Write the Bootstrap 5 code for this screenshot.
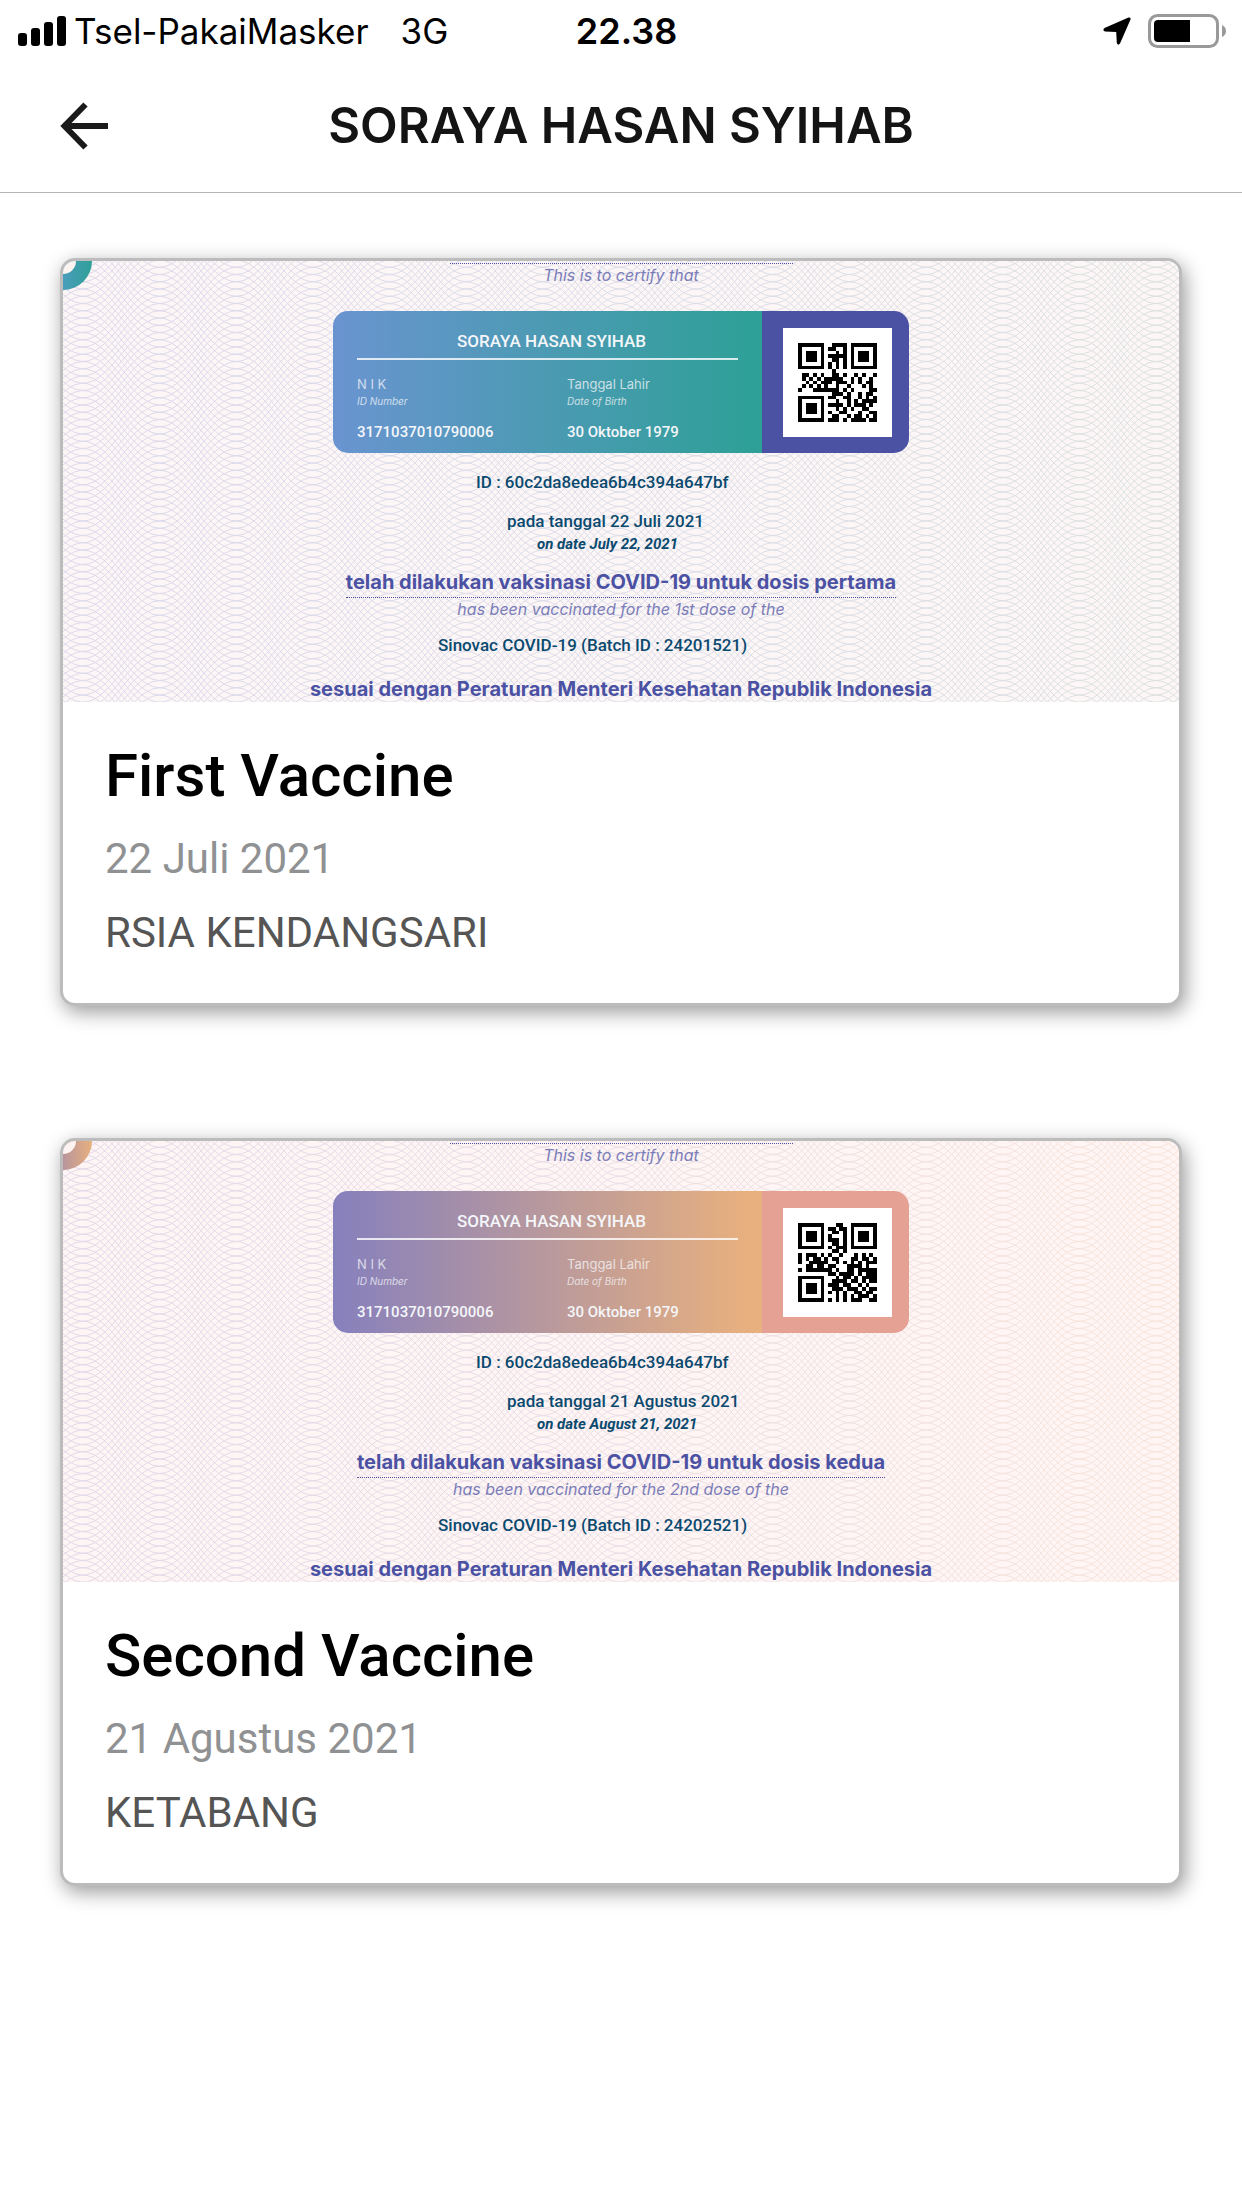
<!DOCTYPE html>
<html lang="id">
<head>
<meta charset="utf-8">
<meta name="viewport" content="width=device-width, initial-scale=1">
<title>Vaccine certificates</title>
<link rel="stylesheet" href="https://cdn.jsdelivr.net/npm/bootstrap@5.3.0/dist/css/bootstrap.min.css">
<style>
body{font-family:Roboto,"Liberation Sans",sans-serif;background:#fff;color:#000}
.status-row{height:60px;padding:2px 15px 0 18px;font:400 35px/40px Inter,sans-serif}
.status-time{font-size:36px;font-weight:600;padding-left:8px}
.top-nav{height:133px;padding:0 60px 1px;border-bottom:1px solid #b4b4b4}
.top-nav h1{font:600 49px/60px Inter,sans-serif;color:#141414}
.back-btn,.nav-spacer{width:48px;height:48px}
.vaccine-list{padding:65px 60px;gap:132px}
.vaccine-card{border:3px solid #bcbcbc;border-radius:15px;box-shadow:3px 6px 20px rgba(0,0,0,.4);overflow:hidden}
.cert{height:441px;background:var(--paper);overflow:hidden}
.cert-art{top:0;left:0;width:100%;height:100%}
.cert-text{width:576px;max-width:100%;font-size:17px;line-height:20px;color:#0b4a6f;font-weight:500;padding-top:2px}
.dots-top{width:343px;border-top:1px dotted #4b51a3}
.lbl-en{font:italic 400 16px/22px Inter,sans-serif;color:#7a7db8}
.lbl-id{font:700 20px/26px Inter,sans-serif;color:#4b51a3}
.lbl-line{border-bottom:1px dotted #4b51a3;padding-bottom:2px}
.id-box{height:142px;border-radius:15px;overflow:hidden;margin:25px 0 19px;color:#f4f6fa}
.id-main{width:429px;padding:20px 24px 0;background:linear-gradient(90deg,var(--g1),var(--g2) 97%)}
.id-name{border-bottom:2px solid rgba(255,255,255,.8);padding-bottom:7px;margin-bottom:16px;padding-left:8px}
.id-col{width:210px}
.fld{font:400 13px/16px Inter,sans-serif;opacity:.75}
.fld-en{font:italic 400 10px/14px Inter,sans-serif;opacity:.75;margin:2px 0 14px}
.fld-val{font-size:15px;line-height:20px}
.id-code{background:var(--accent)}
.qr{width:109px;height:109px;background:#fff}
.ln-id{padding-left:143px}
.ln-date{padding-left:174px;margin-top:19px}
.ln-date-en{padding-left:204px;margin:3px 0 15px;font-size:15px;font-weight:700;font-style:italic}
.ln-batch{padding-left:105px;margin:15px 0 21px}
.tone-blue{--paper:#fdf6f6;--g1:#6a94d0;--g2:#2fa098;--accent:#4b51a3}
.tone-peach{--paper:#fef5f4;--g1:#8680bd;--g2:#e8b07e;--accent:#e5a294}
.vaccine-info{padding:38px 42px 45px}
.vaccine-info h2{font-size:60px;line-height:72px;font-weight:500;margin-bottom:22px}
.vaccine-info p{font-size:42px;line-height:50px;margin:0}
.vaccine-info .when{color:#8f9193;margin-bottom:24px}
.vaccine-info .place{color:#555}
</style>
</head>
<body>
<header>
  <div class="status-row d-flex align-items-center">
    <div class="d-flex align-items-center flex-fill w-50">
      <svg width="48" height="30" viewBox="0 0 48 30" class="me-2 flex-shrink-0"><rect y="17" width="9" height="13" rx="3"/><rect x="13" y="12" width="9" height="18" rx="3"/><rect x="26" y="6" width="9" height="24" rx="3"/><rect x="39" width="9" height="30" rx="3"/></svg>
      <span>Tsel-PakaiMasker</span><span class="ms-4 ps-2">3G</span>
    </div>
    <div class="status-time">22.38</div>
    <div class="d-flex align-items-center justify-content-end flex-fill w-50">
      <svg width="28" height="28" viewBox="0 0 28 28" class="me-3"><path d="M25.500 .5Q28 .2 27.500 2.500L17 26.500Q15 29 13.800 26L13.200 15L2 14.600Q-1 13 1.500 11Z"/></svg>
      <svg width="80" height="34" viewBox="0 0 80 34"><rect x="2.500" y="1.500" width="68" height="31" rx="8" fill="#fff" stroke="#999" stroke-width="3"/><path d="M11 6H43V28H11Q7 28 7 24V10Q7 6 11 6Z"/><path d="M75 11Q79 13 79 17T75 23Z" fill="#999"/></svg>
    </div>
  </div>
  <nav class="top-nav d-flex align-items-center justify-content-between">
    <button type="button" class="back-btn btn p-0 border-0 d-flex" aria-label="Back"><svg width="48" height="48" viewBox="0 0 48 48" fill="none" stroke="#1a1a1a" stroke-width="6"><path d="M25.500 2.500L4.500 24L25.500 45.500M4.500 24H48"/></svg></button>
    <h1 class="m-0">SORAYA HASAN SYIHAB</h1>
    <span class="nav-spacer"></span>
  </nav>
</header>

<main class="vaccine-list d-flex flex-column">
  <article class="vaccine-card card tone-blue">
    <div class="cert position-relative d-flex justify-content-center">
      <svg class="cert-art position-absolute" data-stops="#dcd9eb,#dcdde9,#dbe1e0" data-ring="#4a9dbb,#2fa098"></svg>
      <div class="cert-text position-relative">
        <div class="dots-top mx-auto"></div>
        <div class="lbl-en text-center">This is to certify that</div>
        <div class="id-box d-flex">
          <div class="id-main">
            <div class="id-name text-center">SORAYA HASAN SYIHAB</div>
            <div class="d-flex">
              <div class="id-col"><div class="fld">N I K</div><div class="fld-en">ID Number</div><div class="fld-val">3171037010790006</div></div>
              <div><div class="fld">Tanggal Lahir</div><div class="fld-en">Date of Birth</div><div class="fld-val">30 Oktober 1979</div></div>
            </div>
          </div>
          <div class="id-code flex-fill d-flex align-items-center justify-content-center ps-1"><svg class="qr" viewBox="-15 -15 109 109" data-code="a"></svg></div>
        </div>
        <div class="ln-id">ID : 60c2da8edea6b4c394a647bf</div>
        <div class="ln-date">pada tanggal 22 Juli 2021</div>
        <div class="ln-date-en">on date July 22, 2021</div>
        <div class="text-center"><span class="lbl-id lbl-line d-inline-block">telah dilakukan vaksinasi COVID-19 untuk dosis pertama</span></div>
        <div class="lbl-en text-center">has been vaccinated for the 1st dose of the</div>
        <div class="ln-batch">Sinovac COVID-19 (Batch ID : 24201521)</div>
        <div class="d-flex justify-content-center"><span class="lbl-id text-nowrap">sesuai dengan Peraturan Menteri Kesehatan Republik Indonesia</span></div>
      </div>
    </div>
    <div class="vaccine-info">
      <h2>First Vaccine</h2>
      <p class="when">22 Juli 2021</p>
      <p class="place">RSIA KENDANGSARI</p>
    </div>
  </article>

  <article class="vaccine-card card tone-peach">
    <div class="cert position-relative d-flex justify-content-center">
      <svg class="cert-art position-absolute" data-stops="#e2d9ea,#eadfe6,#f8e4da" data-ring="#b8959c,#e8b07e"></svg>
      <div class="cert-text position-relative">
        <div class="dots-top mx-auto"></div>
        <div class="lbl-en text-center">This is to certify that</div>
        <div class="id-box d-flex">
          <div class="id-main">
            <div class="id-name text-center">SORAYA HASAN SYIHAB</div>
            <div class="d-flex">
              <div class="id-col"><div class="fld">N I K</div><div class="fld-en">ID Number</div><div class="fld-val">3171037010790006</div></div>
              <div><div class="fld">Tanggal Lahir</div><div class="fld-en">Date of Birth</div><div class="fld-val">30 Oktober 1979</div></div>
            </div>
          </div>
          <div class="id-code flex-fill d-flex align-items-center justify-content-center ps-1"><svg class="qr" viewBox="-15 -15 109 109" data-code="b"></svg></div>
        </div>
        <div class="ln-id">ID : 60c2da8edea6b4c394a647bf</div>
        <div class="ln-date">pada tanggal 21 Agustus 2021</div>
        <div class="ln-date-en">on date August 21, 2021</div>
        <div class="text-center"><span class="lbl-id lbl-line d-inline-block">telah dilakukan vaksinasi COVID-19 untuk dosis kedua</span></div>
        <div class="lbl-en text-center">has been vaccinated for the 2nd dose of the</div>
        <div class="ln-batch">Sinovac COVID-19 (Batch ID : 24202521)</div>
        <div class="d-flex justify-content-center"><span class="lbl-id text-nowrap">sesuai dengan Peraturan Menteri Kesehatan Republik Indonesia</span></div>
      </div>
    </div>
    <div class="vaccine-info">
      <h2>Second Vaccine</h2>
      <p class="when">21 Agustus 2021</p>
      <p class="place">KETABANG</p>
    </div>
  </article>
</main>
<script src="https://cdn.jsdelivr.net/npm/bootstrap@5.3.0/dist/js/bootstrap.bundle.min.js"></script>
<script>
// Guilloche background: two mirrored families of waves, tinted left to right
document.querySelectorAll('.cert-art').forEach((svg, n) => {
  const stops = svg.dataset.stops.split(','), ring = svg.dataset.ring.split(',');
  const width = svg.clientWidth, period = 153.3, crest = 20, step = 7.25;
  let d = '';
  for (let y = -30; y < 475; y += step) {
    for (const sign of [1, -1]) {
      for (let x = 0; x <= width + 6; x += 6) {
        const v = y - sign * 29 * Math.cos((x - crest) * 2 * Math.PI / period);
        d += (x ? 'L' : 'M') + x + ' ' + v.toFixed(1);
      }
    }
  }
  svg.innerHTML =
    `<defs><linearGradient id="wave${n}" gradientUnits="userSpaceOnUse" x1="0" x2="${width}">` +
    stops.map((c, i) => `<stop offset="${i / 2}" stop-color="${c}"/>`).join('') +
    `</linearGradient><linearGradient id="ring${n}" gradientUnits="userSpaceOnUse" x1="0" x2="29">` +
    ring.map((c, i) => `<stop offset="${i}" stop-color="${c}"/>`).join('') +
    `</linearGradient></defs><path d="${d}" fill="none" stroke="url(#wave${n})" stroke-width="1"/>` +
    `<circle r="29" fill="url(#ring${n})"/><circle r="13" fill="#fdf4f2"/>`;
});
// QR codes: 21 rows of modules
const codes = {
  a: ['111111100111101111111','100000101100101000001','101110100010101011101','101110101111101011101','101110100110101011101','100000101010101000001','111111101010101111111','000000000100000000000',
      '011010100110100101001','010101011111001010010','001010111011101010110','010101010010010001010','100011111110101000011','000000000111010010110','111111101100110010101','100000100010010101111',
      '101110101111010111010','101110100010101001100','101110101001100010011','100000100110010110101','111111101110101111011'],
  b: ['111111100011001111111','100000101101101000001','101110100110101011101','101110101000101011101','101110101110101011101','100000100110101000001','111111101011101111111','000000000110100000000',
      '101110101001000101010','101011010110001101101','100111110010101010111','001101101100011110100','101111111010011011111','000000001101111010111','111111100010110101111','100000100111101101011',
      '101110101110110010100','101110100111011101011','101110101010100110110','100000100010101011101','111111101010101110011']
};
document.querySelectorAll('.qr').forEach(svg => {
  let d = '';
  codes[svg.dataset.code].forEach((row, r) => {
    for (const run of row.matchAll(/1+/g)) d += `M${run.index} ${r}h${run[0].length}v1h-${run[0].length}z`;
  });
  svg.innerHTML = `<path d="${d}" transform="scale(3.762)" shape-rendering="crispEdges"/>`;
});
</script>
</body>
</html>
